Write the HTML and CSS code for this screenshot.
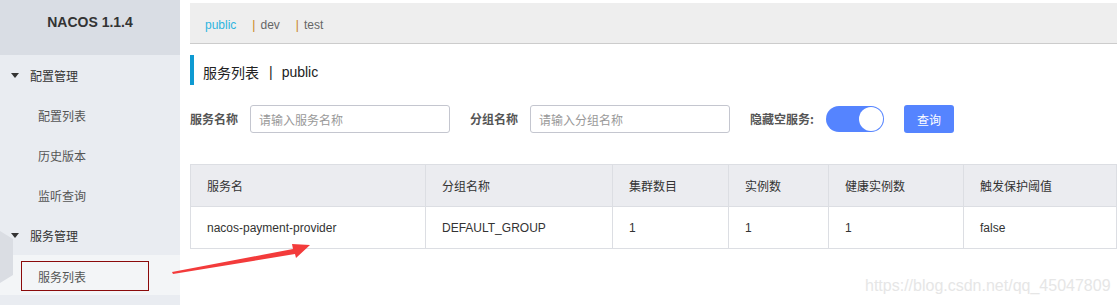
FILE: index.html
```html
<!DOCTYPE html>
<html lang="zh-CN">
<head>
<meta charset="utf-8">
<title>Nacos</title>
<link rel="stylesheet" href="styles.css">
</head>
<body>
<div class="app">
  <aside class="sidebar">
    <div class="brand">NACOS 1.1.4</div>
    <div class="menu">
      <div class="group"><span class="caret"></span>配置管理</div>
      <div class="item">配置列表</div>
      <div class="item">历史版本</div>
      <div class="item">监听查询</div>
      <div class="group"><span class="caret"></span>服务管理</div>
      <div class="item active"><span class="mark">服务列表</span></div>
    </div>
    <svg class="handle" width="14" height="52" viewBox="0 0 14 52"><polygon points="0,0 13,8 13,44 0,52" fill="#dadde3"/></svg>
  </aside>
  <main class="main">
    <div class="ns-bar">
      <span class="ns ns-on">public</span>
      <span class="ns"><span class="sep">|</span>dev</span>
      <span class="ns"><span class="sep">|</span>test</span>
    </div>
    <h1 class="title">服务列表<span class="bar">|</span>public</h1>
    <div class="form">
      <label class="lbl">服务名称</label>
      <div class="input">请输入服务名称</div>
      <label class="lbl">分组名称</label>
      <div class="input">请输入分组名称</div>
      <label class="lbl lbl-hide">隐藏空服务:</label>
      <div class="switch"><span class="knob"></span></div>
      <button class="btn">查询</button>
    </div>
    <table class="grid">
      <thead>
        <tr><th class="c1">服务名</th><th class="c2">分组名称</th><th class="c3">集群数目</th><th class="c4">实例数</th><th class="c5">健康实例数</th><th>触发保护阈值</th></tr>
      </thead>
      <tbody>
        <tr><td>nacos-payment-provider</td><td>DEFAULT_GROUP</td><td>1</td><td>1</td><td>1</td><td>false</td></tr>
      </tbody>
    </table>
  </main>
  <svg class="arrow" width="150" height="40" viewBox="0 0 150 40"><polygon points="0,32 121,9 120,4 138,5 124,18 123,14 1,34" fill="#f33b3b"/></svg>
  <div class="watermark">https://blog.csdn.net/qq_45047809</div>
</div>
</body>
</html>
```
FILE: styles.css
```css
* { box-sizing: border-box; }
html, body { margin: 0; padding: 0; background: #fff; }
body {
  font-family: "Liberation Sans", Arial, "Noto Sans CJK SC", sans-serif;
  font-size: 12px;
  color: #333;
  width: 1117px;
  height: 305px;
  overflow: hidden;
}
.app { position: relative; display: flex; height: 305px; }
.sidebar {
  position: relative;
  width: 180px;
  flex: none;
  background: #e9ecf1;
  display: flex;
  flex-direction: column;
}
.brand {
  height: 55px;
  background: #d9dde4;
  font-weight: bold;
  font-size: 14px;
  color: #333;
  text-align: center;
  padding-top: 14px;
}
.menu { display: flex; flex-direction: column; }
.group, .item {
  height: 40px;
  display: flex;
  align-items: center;
  font-family: "Noto Sans CJK SC", sans-serif;
  font-size: 12px;
  color: #333;
}
.group { padding-left: 11px; }
.caret {
  width: 0; height: 0;
  border-left: 4px solid transparent;
  border-right: 4px solid transparent;
  border-top: 5px solid #333;
  margin-right: 11px;
}
.item { padding-left: 38px; color: #555; }
.item.active { background: #f3f5f7; padding-left: 21px; }
.mark {
  display: flex;
  align-items: center;
  width: 128px;
  height: 30px;
  border: 1px solid #8b0a0a;
  padding-left: 16px;
  margin-top: 2px;
}
.handle { position: absolute; left: 0; top: 231px; }
.main {
  flex: 1;
  padding: 3px 1px 0 10px;
  display: flex;
  flex-direction: column;
}
.ns-bar {
  height: 41px;
  background: #eeeeee;
  border-bottom: 1px solid #cccccc;
  display: flex;
  align-items: center;
  padding-left: 15px;
  padding-top: 4px;
  font-size: 12px;
}
.ns { color: #666; margin-right: 16px; }
.ns-on { color: #2eb5e0; margin-right: 16px; }
.sep { color: #c8841c; margin-right: 5px; }
.title {
  margin: 11px 0 0 0;
  height: 30px;
  border-left: 4px solid #0e9ad2;
  padding-left: 9px;
  padding-top: 4px;
  font-weight: normal;
  font-size: 14px;
  color: #222;
  display: flex;
  align-items: center;
  font-family: "Liberation Sans", Arial, "Noto Sans CJK SC", sans-serif;
}
.title .bar { margin: 0 9px 0 10px; }
.form {
  display: flex;
  align-items: center;
  margin-top: 20px;
  height: 28px;
}
.lbl {
  font-family: "Noto Sans CJK SC", sans-serif;
  font-weight: bold;
  font-size: 12px;
  color: #555;
  width: 60px;
  padding-bottom: 1px;
}
.lbl-hide { width: 76px; }
.input {
  width: 200px;
  height: 28px;
  border: 1px solid #c4c6cf;
  border-radius: 3px;
  color: #999;
  font-family: "Noto Sans CJK SC", sans-serif;
  font-size: 12px;
  padding-left: 8px;
  display: flex;
  align-items: center;
  margin-right: 20px;
}
.switch {
  width: 58px;
  height: 26px;
  border-radius: 13px;
  background: #5584ff;
  position: relative;
  margin-right: 20px;
}
.knob {
  position: absolute;
  right: 1px;
  top: 1px;
  width: 24px;
  height: 24px;
  border-radius: 50%;
  background: #fff;
}
.btn {
  width: 50px;
  height: 28px;
  border: none;
  border-radius: 3px;
  background: #5584ff;
  color: #fff;
  font-family: "Noto Sans CJK SC", sans-serif;
  font-size: 12px;
  padding: 0;
}
.grid {
  margin-top: 31px;
  border-collapse: collapse;
  width: 927px;
  table-layout: fixed;
}
.grid th, .grid td {
  border: 1px solid #dcdee3;
  height: 42px;
  padding: 0 0 0 16px;
  text-align: left;
  font-weight: normal;
  font-size: 12px;
  color: #333;
  font-family: "Liberation Sans", Arial, "Noto Sans CJK SC", sans-serif;
}
.grid th { background: #ebecf0; }
.grid .c1 { width: 235px; }
.grid .c2 { width: 187px; }
.grid .c3 { width: 116px; }
.grid .c4 { width: 100px; }
.grid .c5 { width: 135px; }
.arrow { position: absolute; left: 172px; top: 240px; }
.watermark {
  position: absolute;
  left: 865px;
  top: 277px;
  font-family: "Liberation Sans", Arial, sans-serif;
  font-size: 16px;
  color: #e6e6e6;
}
```
